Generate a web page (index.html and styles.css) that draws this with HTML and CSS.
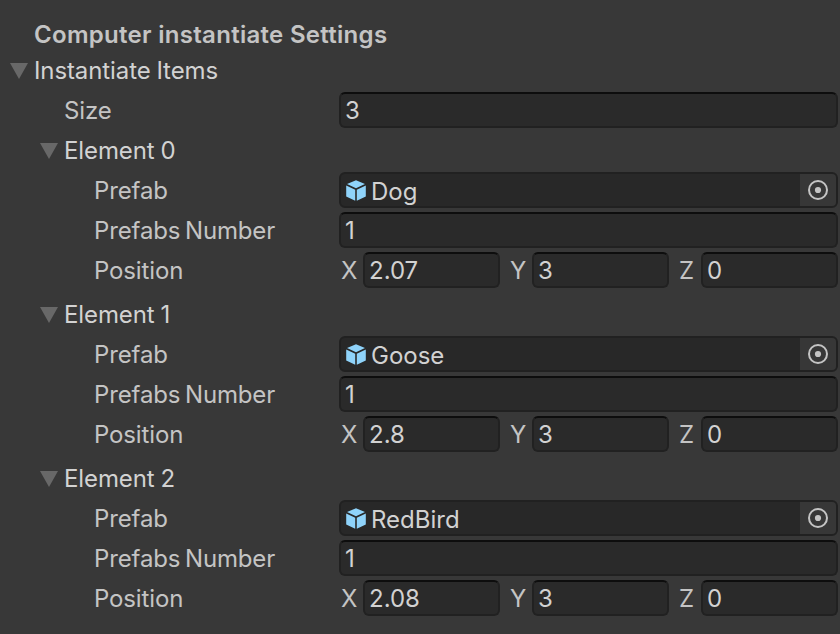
FILE: index.html
```html
<!DOCTYPE html>
<html lang="en">
<head>
<meta charset="utf-8">
<title>Inspector</title>
<link rel="stylesheet" href="styles.css">
</head>
<body>
<svg width="0" height="0" class="defs">
  <symbol id="cube" viewBox="0 0 20 21">
    <path fill="#8fd3fa" d="M10 .3 19 4.1 10 8.3 1 4.1zM.2 5.6 9.2 9.8V20.7L.2 16.4zM19.8 5.6 10.8 9.8V20.7L19.8 16.4z"/>
  </symbol>
  <symbol id="picker" viewBox="0 0 20 20">
    <circle cx="10" cy="10" r="9" fill="none" stroke="#c4c4c4" stroke-width="2"/>
    <circle cx="10" cy="10" r="3.1" fill="#c4c4c4"/>
  </symbol>
</svg>
<main class="inspector">
  <h1 class="title">Computer instantiate Settings</h1>
  <div class="row foldout root"><i class="arrow"></i><span>Instantiate Items</span></div>
  <div class="row"><span class="label size">Size</span><div class="field input">3</div></div>

  <section class="element">
    <div class="row foldout"><i class="arrow"></i><span>Element 0</span></div>
    <div class="row"><span class="label">Prefab</span><div class="field object"><svg class="cube"><use href="#cube"/></svg><span>Dog</span><div class="pick"><svg><use href="#picker"/></svg></div></div></div>
    <div class="row"><span class="label">Prefabs Number</span><div class="field input">1</div></div>
    <div class="row"><span class="label">Position</span><div class="vector"><span>X</span><div class="input">2.07</div><span>Y</span><div class="input">3</div><span>Z</span><div class="input">0</div></div></div>
  </section>

  <section class="element">
    <div class="row foldout"><i class="arrow"></i><span>Element 1</span></div>
    <div class="row"><span class="label">Prefab</span><div class="field object"><svg class="cube"><use href="#cube"/></svg><span>Goose</span><div class="pick"><svg><use href="#picker"/></svg></div></div></div>
    <div class="row"><span class="label">Prefabs Number</span><div class="field input">1</div></div>
    <div class="row"><span class="label">Position</span><div class="vector"><span>X</span><div class="input">2.8</div><span>Y</span><div class="input">3</div><span>Z</span><div class="input">0</div></div></div>
  </section>

  <section class="element">
    <div class="row foldout"><i class="arrow"></i><span>Element 2</span></div>
    <div class="row"><span class="label">Prefab</span><div class="field object"><svg class="cube"><use href="#cube"/></svg><span>RedBird</span><div class="pick"><svg><use href="#picker"/></svg></div></div></div>
    <div class="row"><span class="label">Prefabs Number</span><div class="field input">1</div></div>
    <div class="row"><span class="label">Position</span><div class="vector"><span>X</span><div class="input">2.08</div><span>Y</span><div class="input">3</div><span>Z</span><div class="input">0</div></div></div>
  </section>
</main>
</body>
</html>
```
FILE: styles.css
```css
* { box-sizing: border-box; }
body {
  margin: 0;
  background: #383838;
  color: #c4c4c4;
  font: 400 24px/38px Inter, sans-serif;
}
.defs { position: absolute; }
.inspector {
  height: 634px;
  padding: 16px 2px 0 0;
  overflow: hidden;
}
.title {
  height: 36px;
  margin: 0;
  padding-left: 34px;
  font-size: 24px;
  font-weight: 600;
  letter-spacing: .29px;
}
.row {
  display: flex;
  height: 36px;
  margin-bottom: 4px;
}
.element { margin-bottom: 8px; }
.foldout {
  padding-left: 40px;
  color: #d2d2d2;
  letter-spacing: -.1px;
  word-spacing: -.8px;
}
.foldout.root { padding-left: 10px; }
.arrow {
  width: 18px;
  height: 16px;
  margin: 11px 6px 0 0;
  background: #686868;
  clip-path: polygon(0 0, 100% 0, 50% 100%);
}
.label {
  width: 339px;
  padding-left: 94px;
  letter-spacing: -.14px;
  word-spacing: -2px;
}
.label.size { padding-left: 64px; }
.field { flex: 1; }
.input, .object {
  height: 36px;
  border: 2px solid #212121;
  border-radius: 6px;
  background: #2a2a2a;
  color: #d2d2d2;
}
.input {
  padding-left: 4px;
  border-top-color: #0d0d0d;
  line-height: 34px;
}
.object {
  display: flex;
  padding-left: 5px;
  background: #282828;
  line-height: 35px;
}
.cube {
  width: 20px;
  height: 21px;
  margin: 6px 5px 0 0;
}
.pick {
  display: flex;
  align-items: center;
  width: 36px;
  height: 32px;
  margin-left: auto;
  padding-left: 8px;
  border-radius: 0 4px 4px 0;
  background: #373737;
}
.pick svg {
  width: 20px;
  height: 20px;
}
.vector {
  display: grid;
  flex: 1;
  grid-template-columns: 24px 137px 32px 137px 32px 137px;
}
.vector > span { padding-left: 10px; }
.vector > span:first-child { padding-left: 2px; }
```
